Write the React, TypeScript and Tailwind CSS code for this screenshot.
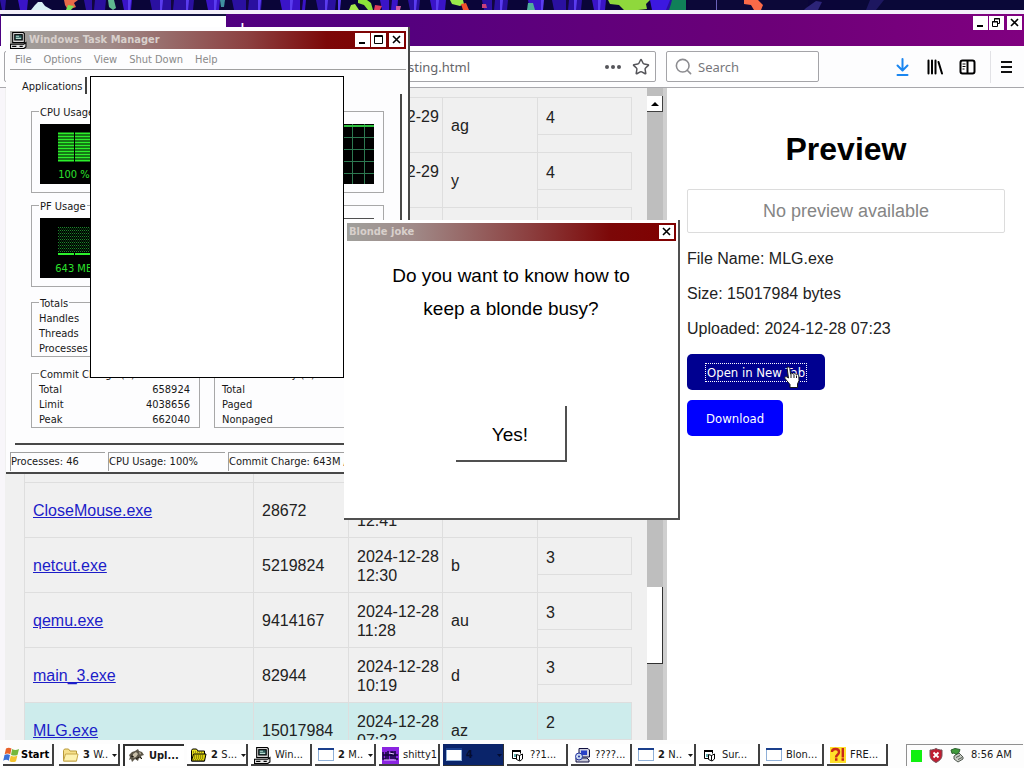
import React from "react";
import { Search, Star } from "lucide-react";

const ui = "font-['DejaVu_Sans_Condensed','DejaVu_Sans',sans-serif]";

type Row = { name: string; size: string; day: string; time: string; by: string; count: string; on?: boolean };

const blank: Row = { name: "", size: "", day: "", time: "", by: "", count: "" };

const rows: Row[] = [
  { ...blank, day: "2024-12-29", by: "ag", count: "4" },
  { ...blank, day: "2024-12-29", by: "y", count: "4" },
  blank,
  blank,
  blank,
  blank,
  blank,
  { name: "CloseMouse.exe", size: "28672", day: "2024-12-28", time: "12:41", by: "", count: "" },
  { name: "netcut.exe", size: "5219824", day: "2024-12-28", time: "12:30", by: "b", count: "3" },
  { name: "qemu.exe", size: "9414167", day: "2024-12-28", time: "11:28", by: "au", count: "3" },
  { name: "main_3.exe", size: "82944", day: "2024-12-28", time: "10:19", by: "d", count: "3" },
  { name: "MLG.exe", size: "15017984", day: "2024-12-28", time: "07:23", by: "az", count: "2", on: true },
];

function Wallpaper() {
  const blues = [
    [0, 6], [18, 10], [84, 22], [122, 10], [150, 44], [206, 14], [232, 30], [280, 26], [316, 20],
    [380, 18], [408, 12], [430, 16], [482, 26], [528, 14], [552, 30], [592, 14], [652, 26],
  ];
  const streaks = [92, 128, 160, 171, 186, 214, 246, 258, 290, 300, 325, 338, 389, 414, 436, 492, 500, 541, 566, 574, 598];
  return (
    <svg className="block h-[10px] w-full shrink-0" viewBox="0 0 1024 10" preserveAspectRatio="none" aria-hidden="true">
      <rect width="1024" height="10" fill="#0a0538" />
      {blues.map(([x, w], i) => (
        <path key={x} d={`M${x} 0h${w}l-1 10h${-(w - 3)}z`} fill={i % 2 ? "#3a14c8" : "#2a10a0"} />
      ))}
      {streaks.map((x, i) => (
        <path key={x} d={`M${x} 0h3l-1 10h-2z`} fill={i % 3 ? "#5a3cf0" : "#12063f"} />
      ))}
      <path d="M31 10l4-5 3-3h4l3 4 7 4z" fill="#d8f0f4" />
      <path d="M64 0h14l-4 3 2 4-8 3-3-5z" fill="#e86a48" />
      <path d="M68 5l6 1-3 4h-5z" fill="#7be05a" />
      <path d="M108 0h6l2 8-3 2-4-3z" fill="#5fb890" />
      <path d="M220 0h5l-1 7h-3z" fill="#3f8fa0" />
      <path d="M349 10l2-5 4-1 4 6z" fill="#a2e84a" />
      <path d="M358 0h9l4 3 2 7h-5l-4-5-6-2z" fill="#8be23a" />
      <path d="M375 5l7 1-2 4h-6z" fill="#e0405a" />
      <path d="M396 6h5l-1 4h-4z" fill="#d05aa0" />
      <path d="M450 0h13l1 4-4 2-8-2z" fill="#9aea4a" />
      <path d="M461 4l5-1 3 7h-6z" fill="#f0502a" />
      <path d="M482 4h4l1 4h-5z" fill="#c8407a" />
      <path d="M528 3h5l2 7h-8z" fill="#4fae9a" />
      <path d="M608 0h42l-4 4 1 5-9 1h-14l-5-5-9-1z" fill="#8fd83c" />
      <path d="M650 0h20l-4 10h-14z" fill="#3c18e0" />
      <path d="M672 0h14v10h-17l2-6z" fill="#108058" />
      <path d="M688 0h120v10H688z" fill="#0c0838" />
      <path d="M716 0h1v10h-1z" fill="#6a62b8" />
      <path d="M744 0h14l5 5-2 5h-7l-3-5-7-1z" fill="#fa6a48" />
      <path d="M806 8l10-7 6 1-4 8h-14z" fill="#2c2478" />
      <path d="M840 0h184v10H840z" fill="#0a0838" />
      <path d="M870 0l14 0-8 10h-10z" fill="#1d1760" />
    </svg>
  );
}

function CaptionButton({ kind }: { kind: "min" | "max" | "restore" | "close" }) {
  return (
    <button aria-label={kind} className="flex h-[14px] w-[15px] items-center justify-center bg-white text-black">
      <svg width="13" height="12" viewBox="0 0 13 12" fill="none" stroke="currentColor" aria-hidden="true">
        {kind === "min" && <path d="M3 9h6" strokeWidth="2" />}
        {kind === "max" && <path d="M2.500 1.500h8v8h-8zM2 2.500h9" />}
        {kind === "restore" && <path d="M4.500 1.500h5v5h-2M4.500 1.500v3M4 2h6M2.500 4.500h5v5h-5zM2 5h6" />}
        {kind === "close" && <path d="M3 2l7 7M10 2L3 9" strokeWidth="1.600" />}
      </svg>
    </button>
  );
}

function PcIcon() {
  return (
    <svg width="17" height="17" viewBox="0 0 16 16" className="shrink-0" aria-hidden="true">
      <path d="M2.500.5h10l1 1v8.500h-11z" fill="#d4d4d4" stroke="#000" />
      <rect x="4.500" y="2.500" width="7" height="5" fill="#2c5a5a" stroke="#000" />
      <path d="M5.500 4h3M5.500 6h5" stroke="#b8dcd0" fill="none" />
      <path d="M.5 11.500h12.500l2-1.500v4l-2 1.500H.5z" fill="#e4e4e4" stroke="#000" />
      <path d="M2 13.500h4M9 13.500h3" stroke="#000" />
    </svg>
  );
}

function FolderIcon({ dark }: { dark?: boolean }) {
  return (
    <svg width="17" height="16" viewBox="0 0 17 16" className="shrink-0" aria-hidden="true">
      <path d="M1.500 3.500l1-1.500h4l1.500 2h6.500v10h-13z" fill={dark ? "#e8e020" : "#f6e08a"} stroke={dark ? "#000" : "#b89a3a"} />
      <path d="M1.500 14l2-7h12.500l-1.500 7z" fill={dark ? "#d8d010" : "#fdf2b0"} stroke={dark ? "#000" : "#c8a84a"} />
      {dark && <path d="M3 5h10M4 9h10M4 11h10M3 13h10" stroke="#555000" strokeDasharray="1 1" />}
    </svg>
  );
}

function FormIcon() {
  return (
    <svg width="16" height="14" viewBox="0 0 16 14" className="shrink-0" aria-hidden="true">
      <rect x=".5" y=".5" width="15" height="12" fill="#fff" stroke="#8fb0d8" />
      <path d="M0 1h16" stroke="#1a3f8c" strokeWidth="2" />
    </svg>
  );
}

function VbIcon() {
  return (
    <svg width="16" height="16" viewBox="0 0 16 16" className="shrink-0" aria-hidden="true">
      <path d="M2.500 3.500h8v3M2.500 3.500v8h4" fill="#fff" stroke="#000" />
      <path d="M2 4h9" stroke="#000" strokeWidth="2" />
      <path d="M6.500 7.500l3 1 3-1.500v5l-2.500 2-3.500-1.500z" fill="#fff" stroke="#000" />
      <path d="M9.500 8.500v5" stroke="#000" />
      <path d="M4 7h2v3H4z" fill="#60b0b0" />
    </svg>
  );
}

function WindowsLogo() {
  return (
    <svg width="17" height="16" viewBox="0 0 17 16" className="shrink-0" aria-hidden="true">
      <path d="M3 1.500c2-1.200 3.600-1 5.500 0L7.300 7.200c-1.600-1-3.800-1-5.600 0z" fill="#e8622a" />
      <path d="M9.200 2c2 1.200 4 1.200 6.800 0l-1.400 5.700c-2 1.200-4.200 1.200-6.600 0z" fill="#74b83c" />
      <path d="M1.500 8c1.700-1.200 3.800-1 5.500 0l-1.200 5.700c-1.600-1.200-3.800-1-5.600 0z" fill="#3a70d8" />
      <path d="M7.800 8.500c2 1.200 4.200 1.200 6.600 0L13 14.200c-2 1.200-4.200 1.200-6.500 0z" fill="#f4c430" />
    </svg>
  );
}

function FoxIcon() {
  return (
    <svg width="17" height="16" viewBox="0 0 17 16" className="shrink-0" aria-hidden="true">
      <path d="M1 7l3-3 3-1 3-2 1 2 3 1 2 3-3 1 1 3-3-1-1 3-3-2-3 3-1-3-2 1 1-3z" fill="#5c5648" />
      <path d="M5 6l3-2 2 2-2 3-3 1zM11 4l2 1-1 2z" fill="#c8bfa8" />
      <path d="M3 8l3 1M8 11l3-2M12 9l2 2" stroke="#1c1810" />
    </svg>
  );
}

function ShIcon() {
  return (
    <svg width="17" height="17" viewBox="0 0 17 17" className="shrink-0" aria-hidden="true">
      <rect width="17" height="17" fill="#8a24e0" />
      <path d="M1 5v7h3V5M6 4v9M9 12V5h2v7M13 4v8h3M1 8h15" stroke="#12063a" strokeWidth="1.500" fill="none" />
      <path d="M2 13h12M7 6l5 1" stroke="#e8c8ff" />
    </svg>
  );
}

function SetupIcon() {
  return (
    <svg width="17" height="17" viewBox="0 0 17 17" className="shrink-0" aria-hidden="true">
      <path d="M5 1.500h9l1.500 1.500v7H5z" fill="#d0d0e0" stroke="#101040" />
      <rect x="7" y="3.500" width="6" height="4.500" fill="#2840c8" />
      <path d="M2 11h11l2 2v2H2z" fill="#c8c8d8" stroke="#101040" />
      <circle cx="5" cy="9.500" r="3.500" fill="#c8d8f0" stroke="#2030a0" />
      <circle cx="5" cy="9.500" r="1" fill="#2030a0" />
    </svg>
  );
}

function AlertIcon() {
  return (
    <svg width="16" height="16" viewBox="0 0 16 16" className="shrink-0" aria-hidden="true">
      <rect width="16" height="16" fill="#ffe02a" />
      <path d="M2 5c0-4 7-4 7 0 0 3-3 2.500-3 5.500" fill="none" stroke="#c8281a" strokeWidth="2.400" />
      <path d="M5 12.500h2.500M11.500 12.500H14" stroke="#c8281a" strokeWidth="2.600" />
      <path d="M12.800 1v9.500" stroke="#c8281a" strokeWidth="2.400" />
    </svg>
  );
}

function BrowserWindow() {
  return (
    <section className="flex min-h-0 flex-1 flex-col border-t-4 border-[#f4f0fa] bg-white">
      <header className="flex h-8 shrink-0 justify-between bg-[linear-gradient(90deg,#4b0082_0%,#55007e_40%,#6c0078_75%,#800080_100%)]">
        <div className="flex">
          <div className="ml-px h-full w-[225px] border-t-2 border-[#141440] bg-white" />
          <span className="ml-[10px] mt-[4px] text-[22px] leading-[22px] text-white">+</span>
        </div>
        <div className="mr-[2px] mt-[2px] flex h-[14px]">
          <CaptionButton kind="min" />
          <span className="w-px" />
          <CaptionButton kind="restore" />
          <span className="w-[3px]" />
          <CaptionButton kind="close" />
        </div>
      </header>

      <nav className="flex h-[42px] shrink-0 items-center border-b border-[#a8a8ac] bg-[#fdfdfe] pl-1 pr-[11px] text-[13px] text-[#66666a] font-['Noto_Sans',sans-serif]">
        <label className="flex h-[31px] min-w-0 flex-1 items-center gap-[11px] rounded-[2px] border border-[#a4a4a8] bg-white pr-[5px]">
          <input aria-label="Address" defaultValue="sting.html" className="h-full min-w-0 flex-1 bg-transparent pl-[403px] outline-none" />
          <svg width="16" height="4" viewBox="0 0 16 4" fill="#55555a" aria-hidden="true">
            <circle cx="2" cy="2" r="2" />
            <circle cx="8" cy="2" r="2" />
            <circle cx="14" cy="2" r="2" />
          </svg>
          <Star size={18} strokeWidth={2} className="text-[#55555a]" />
        </label>
        <label className="ml-[10px] flex h-[31px] w-[153px] items-center gap-[5px] rounded-[2px] border border-[#a4a4a8] bg-white pl-[7px]">
          <Search size={19} strokeWidth={2} className="shrink-0 text-[#8c8c90]" />
          <input aria-label="Search" placeholder="Search" className="h-full min-w-0 flex-1 bg-transparent outline-none placeholder:text-[#77777c]" />
        </label>
        <div className="ml-[75px] flex items-center gap-4 text-black">
          <svg width="17" height="18" viewBox="0 0 17 18" fill="none" stroke="#1a86f0" strokeWidth="2" strokeLinecap="round" strokeLinejoin="round" aria-hidden="true">
            <path d="M8.500 1v11M3.500 7.500l5 5 5-5M3.500 17h10" />
          </svg>
          <svg width="16" height="16" viewBox="0 0 16 16" fill="none" stroke="currentColor" strokeWidth="2" strokeLinecap="round" aria-hidden="true">
            <path d="M1.500 1.500v13M5 1.500v13M8.500 1.500v13M11.500 3l3.500 11.500" />
          </svg>
          <svg width="17" height="16" viewBox="0 0 17 16" fill="none" stroke="currentColor" strokeWidth="2" aria-hidden="true">
            <rect x="1.500" y="1.500" width="14" height="13" rx="2" />
            <path d="M8.500 2v12" />
            <path d="M3.500 5h3M3.500 7.500h3M3.500 10h2" strokeWidth="1" />
          </svg>
        </div>
        <span className="ml-[14px] h-8 w-px bg-[#e2e2e6]" />
        <svg width="14" height="14" viewBox="0 0 14 14" className="ml-2" stroke="#111" strokeWidth="2" aria-hidden="true">
          <path d="M2 2h11M2 7h11M2 12h11" />
        </svg>
      </nav>

      <main className="flex min-h-0 flex-1 text-[16px] text-[#222]">
        <div className="flex min-w-0 flex-1 border-l-[5px] border-[#f8f6fa] bg-[#f0f0f0]">
          <div className="min-w-0 flex-1 overflow-hidden pl-[19px] pr-[15px] pt-[9px]">
            <table className="w-full table-fixed border-separate border-spacing-0 text-left leading-[19px]">
              <colgroup>
                <col />
                <col className="w-[95px]" />
                <col className="w-[94px]" />
                <col className="w-[95px]" />
                <col className="w-[95px]" />
              </colgroup>
              <tbody>
                {rows.map((r, i) => (
                  <tr key={i} className={r.on ? "h-[55px] bg-[#cdecec]" : "h-[55px]"}>
                    <td className="border-l border-t border-[#dedede] px-2 pt-px">
                      {r.name && (
                        <a href="#file" className="text-[#1c1cc8] underline">
                          {r.name}
                        </a>
                      )}
                    </td>
                    <td className="border-l border-t border-[#dedede] px-2 pt-px">{r.size}</td>
                    <td className="border-l border-t border-[#dedede] pl-2 pr-0 pt-[2px]">
                      <div className="h-[38px] whitespace-nowrap">
                        {r.day}
                        <br />
                        {r.time}
                      </div>
                    </td>
                    <td className="border-l border-t border-[#dedede] px-2 pt-px">{r.by}</td>
                    <td className="border-l border-[#dedede] p-0 align-top">
                      <div className="h-[38px] border-b border-r border-t border-[#dedede] px-2 pt-[10px]">{r.count}</div>
                    </td>
                  </tr>
                ))}
              </tbody>
            </table>
          </div>
          <div className="flex w-4 shrink-0 flex-col bg-[#bebebe] pt-[8px]">
            <div className="flex h-4 items-center justify-center border-b border-r border-[#404040] bg-white">
              <svg width="8" height="4" viewBox="0 0 8 4" aria-hidden="true">
                <path d="M4 0l4 4H0z" />
              </svg>
            </div>
            <div className="mt-[475px] h-[77px] shrink-0 border-b border-r border-[#303030] bg-white" />
          </div>
          <div className="w-1 shrink-0 bg-[#cfcfcf]" />
        </div>

        <aside className="w-[357px] shrink-0 bg-white pl-5 pr-[19px] pt-[42px]">
          <h1 className="text-center text-[32px] font-bold leading-[38px] text-black">Preview</h1>
          <p className="mt-[21px] rounded-[2px] border border-[#dcdcdc] py-[10px] text-center text-[18px] leading-[22px] text-[#858585]">
            No preview available
          </p>
          <div className="mt-4 flex flex-col gap-4 leading-[19px]">
            <p>File Name: MLG.exe</p>
            <p>Size: 15017984 bytes</p>
            <p>Uploaded: 2024-12-28 07:23</p>
          </div>
          <div className={`mt-4 flex flex-col items-start gap-[10px] text-[13px] text-white ${ui}`}>
            <button className="h-9 rounded-[5px] bg-[#000090] px-[18px] pt-px">
              <span className="block border border-dotted border-white px-px leading-[17px]">Open in New Tab</span>
            </button>
            <button className="h-9 rounded-[5px] bg-[#0000ff] px-[19px] pt-px">Download</button>
          </div>
        </aside>
      </main>
    </section>
  );
}

const group = "border border-[#a8a8a8] pl-[7px]";
const legend = "px-px pt-[3px] leading-[14px]";

function Totals({ title, items }: { title: string; items: [string, string][] }) {
  return (
    <fieldset className={group}>
      <legend className={legend}>{title}</legend>
      <dl className="pr-[9px] leading-[15px]">
        {items.map(([k, v]) => (
          <div key={k} className="flex justify-between">
            <dt>{k}</dt>
            <dd>{v}</dd>
          </div>
        ))}
      </dl>
    </fieldset>
  );
}

function TaskManager() {
  return (
    <section className={`absolute left-[6px] top-[27px] w-[404px] border-b-2 border-r-2 border-[#484848] bg-[#fdfdfe] pl-1 pt-1 text-[11px] text-[#181818] ${ui}`}>
      <header className="mr-[2px] flex h-[18px] items-center bg-[linear-gradient(90deg,#a0a09c_0%,#a08a88_25%,#8c4040_60%,#7c0808_80%,#800000_100%)] pr-[2px]">
        <PcIcon />
        <h2 className="flex-1 pl-[2px] text-[11px] font-bold text-[#d8d0cc]">Windows Task Manager</h2>
        <CaptionButton kind="min" />
        <span className="w-px" />
        <CaptionButton kind="max" />
        <span className="w-[3px]" />
        <CaptionButton kind="close" />
      </header>
      <nav className="mr-[2px] flex h-[21px] items-center gap-3 border-b border-[#a0a0a0] pl-[5px] pt-[2px] text-[#8a8a8a]">
        <span>File</span>
        <span>Options</span>
        <span>View</span>
        <span>Shut Down</span>
        <span>Help</span>
      </nav>
      <div className="flex h-[24px] items-end">
        <span className="ml-[12px] h-[17px] border-r-2 border-[#404040] pr-[3px] leading-[19px]">Applications</span>
      </div>
      <div className="ml-[5px] mr-[6px] border-b-2 border-r-2 border-[#484848] pb-[15px] pl-4 pr-4 pt-[9px]">
        <fieldset className={`${group} h-[90px]`}>
          <legend className={legend}>CPU Usage</legend>
          <div className="mt-1 flex h-[60px] gap-[14px] pl-px pr-[9px]">
            <div className="flex w-[68px] flex-col items-center bg-black pt-[8px] text-[#2ce02c]">
              <svg width="32" height="30" viewBox="0 0 32 30" aria-hidden="true">
                <path d="M0 1.500h16M0 4.500h16M0 7.500h16M0 10.500h16M0 13.500h16M0 16.500h16M0 19.500h16M0 22.500h16M0 25.500h16M0 28.500h16M17 1.500h15M17 4.500h15M17 7.500h15M17 10.500h15M17 13.500h15M17 16.500h15M17 19.500h15M17 22.500h15M17 25.500h15M17 28.500h15" stroke="#2cf02c" strokeWidth="2.200" />
              </svg>
              <span className="mt-[5px]">100 %</span>
            </div>
            <svg className="h-full flex-1 bg-black" viewBox="0 0 252 60" preserveAspectRatio="xMaxYMin slice" aria-hidden="true">
              <path d="M0 13.500h252M0 25.500h252M0 37.500h252M0 49.500h252M206.500 0v60M218.500 0v60M230.500 0v60M242.500 0v60" stroke="#2c7850" />
              <path d="M0 2h252" stroke="#30c040" strokeWidth="2" />
            </svg>
          </div>
        </fieldset>
        <fieldset className={`${group} mt-1 h-[90px]`}>
          <legend className={legend}>PF Usage</legend>
          <div className="mt-1 flex h-[60px] gap-[14px] pl-px pr-[9px]">
            <div className="flex w-[68px] flex-col items-center bg-black pt-[8px] text-[#2ce02c]">
              <svg width="32" height="30" viewBox="0 0 32 30" aria-hidden="true">
                <path d="M0 1.500h32M0 4.500h32M0 7.500h32M0 10.500h32M0 13.500h32M0 16.500h32M0 19.500h32M0 22.500h32M0 25.500h32" stroke="#1c8a2c" strokeDasharray="1 1" />
                <path d="M1 3h32M1 6h32M1 9h32M1 12h32M1 15h32M1 18h32M1 21h32M1 24h32" stroke="#0f5a1c" strokeDasharray="1 1" />
                <path d="M0 28h16M17 28h15" stroke="#2cf02c" strokeWidth="2" />
              </svg>
              <span className="mt-[5px]">643 MB</span>
            </div>
            <div className="flex-1 border-t border-[#505050]" />
          </div>
        </fieldset>
        <div className="mt-[7px] grid grid-cols-[169px_1fr] gap-x-[14px] gap-y-2">
          <Totals title="Totals" items={[["Handles", ""], ["Threads", ""], ["Processes", ""]]} />
          <div />
          <Totals title="Commit Charge (K)" items={[["Total", "658924"], ["Limit", "4038656"], ["Peak", "662040"]]} />
          <Totals title="Kernel Memory (K)" items={[["Total", ""], ["Paged", ""], ["Nonpaged", ""]]} />
        </div>
      </div>
      <footer className="mb-px mt-[7px] flex h-[19px] gap-[3px] leading-[18px]">
        <span className="w-[95px] border-l border-t border-[#a0a0a0]">Processes: 46</span>
        <span className="w-[117px] border-l border-t border-[#a0a0a0]">CPU Usage: 100%</span>
        <span className="flex-1 whitespace-nowrap border-l border-t border-[#a0a0a0]">Commit Charge: 643M /</span>
      </footer>
    </section>
  );
}

function JokeDialog() {
  return (
    <section className="absolute left-[344px] top-[220px] flex h-[300px] w-[336px] flex-col items-center border-b-2 border-r-2 border-[#505050] bg-white pt-[3px] text-black">
      <header className={`flex h-[18px] w-full items-center justify-between border-l-[3px] border-r-2 border-white bg-[linear-gradient(90deg,#a0a09c_0%,#a08a88_20%,#8c4040_55%,#7c0808_80%,#800000_100%)] pl-[2px] pr-[2px] ${ui}`}>
        <h2 className="text-[11px] font-bold text-[#d8d0cc]">Blonde joke</h2>
        <CaptionButton kind="close" />
      </header>
      <p className="mt-[18px] w-[260px] text-center text-[19px] leading-[33px]">Do you want to know how to keep a blonde busy?</p>
      <button className="mt-[81px] h-[56px] w-[111px] border-b-2 border-r-2 border-[#505050] pt-1 text-[19px]">Yes!</button>
    </section>
  );
}

type Task = { icon: React.ReactNode; count?: string; label: string; drop?: boolean; state?: "pressed" | "flash" };

const tasks: Task[] = [
  { icon: <FolderIcon />, count: "3", label: "W..", drop: true },
  { icon: <FoxIcon />, label: "Upl...", state: "pressed" },
  { icon: <FolderIcon dark />, count: "2", label: "S...", drop: true },
  { icon: <PcIcon />, label: "Win..." },
  { icon: <FormIcon />, count: "2", label: "M..", drop: true },
  { icon: <ShIcon />, label: "shitty1" },
  { icon: <FormIcon />, count: "4", label: "", drop: true, state: "flash" },
  { icon: <VbIcon />, label: "??1..." },
  { icon: <SetupIcon />, label: "????..." },
  { icon: <FormIcon />, count: "2", label: "N..", drop: true },
  { icon: <VbIcon />, label: "Sur..." },
  { icon: <FormIcon />, label: "Blon..." },
  { icon: <AlertIcon />, label: "FRE..." },
];

const taskBase = "flex h-[22px] w-[61px] shrink-0 items-center gap-1 overflow-hidden whitespace-nowrap pl-[3px]";

function taskClass(state?: string) {
  if (state === "pressed") return `${taskBase} border-l-2 border-t-2 border-[#303030] bg-white font-bold`;
  if (state === "flash") return `${taskBase} border-b border-r border-[#303030] bg-[#0a246a] pt-px text-[#050d30]`;
  return `${taskBase} border-b-2 border-r-2 border-[#404040] bg-white pt-[2px]`;
}

function Taskbar() {
  return (
    <footer className={`flex h-7 shrink-0 items-center gap-[3px] bg-[#fdfdfd] pl-[3px] pt-[2px] text-[11px] text-[#181818] ${ui}`}>
      <button className="mr-[2px] flex h-[22px] w-[51px] shrink-0 items-center gap-px whitespace-nowrap border-b-2 border-r-2 border-[#404040] pt-[2px] font-bold text-black">
        <WindowsLogo />
        Start
      </button>
      {tasks.map((t, i) => (
        <button key={i} className={taskClass(t.state)}>
          {t.icon}
          <span className="flex-1 text-left">
            {t.count && <b>{t.count} </b>}
            {t.label}
          </span>
          {t.drop && (
            <svg width="5" height="3" viewBox="0 0 5 3" fill="currentColor" className="mr-px shrink-0" aria-hidden="true">
              <path d="M0 0h5L2.500 3z" />
            </svg>
          )}
        </button>
      ))}
      <div className="ml-auto mr-px flex h-[22px] w-[117px] shrink-0 items-center gap-[7px] border-l border-t border-[#909090] pl-[4px]">
        <span className="h-3 w-[11px] bg-[#10f010]" />
        <svg width="14" height="15" viewBox="0 0 14 15" aria-hidden="true">
          <path d="M7 .5c2 1.200 4 1.500 6 1.500v5c0 4-3 6-6 7.500C4 13 1 11 1 7V2c2 0 4-.3 6-1.500z" fill="#c01c30" stroke="#705058" />
          <path d="M4.500 4.500l5 5M9.500 4.500l-5 5" stroke="#fff" strokeWidth="1.800" />
        </svg>
        <svg width="14" height="15" viewBox="0 0 14 15" aria-hidden="true">
          <path d="M4 8l5-3 4 4v2l-5 3-4-3z" fill="#c8ccc4" stroke="#505850" />
          <path d="M6 9.500l4-2M8 11.500l4-2" stroke="#505850" />
          <path d="M1 2l4-1.500 5 1-1 3-3 2-2-1.500-2 .5z" fill="#3f9a3a" stroke="#2c6030" />
        </svg>
        <time className="whitespace-nowrap">8:56 AM</time>
      </div>
    </footer>
  );
}

export default function App() {
  return (
    <div className="relative flex h-screen flex-col overflow-hidden bg-white font-['Liberation_Sans',Arial,sans-serif]">
      <Wallpaper />
      <BrowserWindow />
      <Taskbar />
      <TaskManager />
      <div className="absolute left-[90px] top-[76px] h-[302px] w-[254px] border border-black bg-white" />
      <JokeDialog />
      <svg className="absolute left-[783px] top-[366px]" width="18" height="23" viewBox="0 0 18 23" aria-hidden="true">
        <path d="M4 1.500c1.200-1 2.500-.5 2.800 1L7.500 8l1-.8 2 .8 1-.6 2 1 .8-.3 1.500 1.400.2 5-1.500 3.500v3.500H7v-3L2 12.500c-.8-1.500.8-2.500 2-1.500l1.500 1z" fill="#fff" stroke="#181818" />
        <path d="M8 8v4M11 8.500V12M13.500 9.500V12" stroke="#181818" />
      </svg>
    </div>
  );
}
